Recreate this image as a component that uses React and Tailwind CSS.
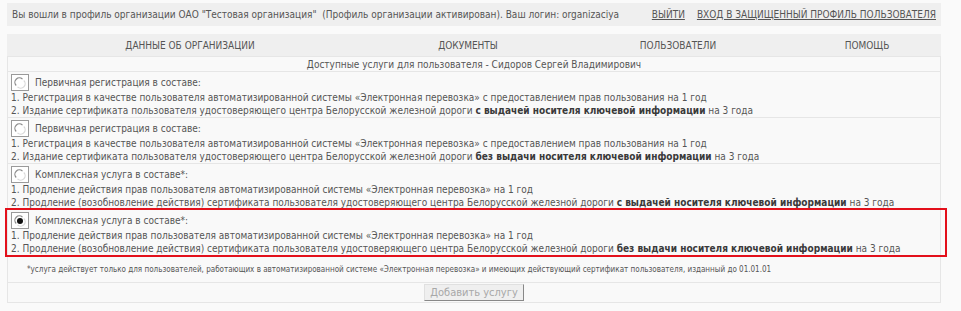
import React from 'react'

const Radio = ({ checked }) => (
  <div className="w-[18px] h-[17px] border border-[#9a9a9a] bg-white flex items-center justify-center shrink-0">
    <svg width="12" height="12" viewBox="0 0 12 12">
      <path d="M2.2 8.5 A4.3 4.3 0 0 1 8.5 2.2" fill="none" stroke="#8a8a8a" strokeWidth="1.2" />
      <path d="M9.8 3.5 A4.3 4.3 0 0 1 3.5 9.8" fill="none" stroke="#d8d8d8" strokeWidth="1.2" />
      {checked && <circle cx="6" cy="6" r="3" fill="#111" />}
    </svg>
  </div>
)

const services = [
  {
    title: 'Первичная регистрация в составе:',
    l1: '1. Регистрация в качестве пользователя автоматизированной системы «Электронная перевозка» с предоставлением прав пользования на 1 год',
    pre: '2. Издание сертификата пользователя удостоверяющего центра Белорусской железной дороги ',
    bold: 'с выдачей носителя ключевой информации',
  },
  {
    title: 'Первичная регистрация в составе:',
    l1: '1. Регистрация в качестве пользователя автоматизированной системы «Электронная перевозка» с предоставлением прав пользования на 1 год',
    pre: '2. Издание сертификата пользователя удостоверяющего центра Белорусской железной дороги ',
    bold: 'без выдачи носителя ключевой информации',
  },
  {
    title: 'Комплексная услуга в составе*:',
    l1: '1. Продление действия прав пользователя автоматизированной системы «Электронная перевозка» на 1 год',
    pre: '2. Продление (возобновление действия) сертификата пользователя удостоверяющего центра Белорусской железной дороги ',
    bold: 'с выдачей носителя ключевой информации',
  },
  {
    title: 'Комплексная услуга в составе*:',
    l1: '1. Продление действия прав пользователя автоматизированной системы «Электронная перевозка» на 1 год',
    pre: '2. Продление (возобновление действия) сертификата пользователя удостоверяющего центра Белорусской железной дороги ',
    bold: 'без выдачи носителя ключевой информации',
    checked: true,
  },
]

const App = () => {
  return (
    <div className="min-h-[311px] bg-[#fafafa] pt-[3px] px-[7px] text-[#555] text-[10px] leading-[13px]" style={{ fontFamily: '"DejaVu Sans Condensed", "DejaVu Sans", sans-serif' }}>
      <div className="w-[934px] h-[23px] bg-[#efefef] flex items-center pl-[5px] pr-[5px] whitespace-nowrap">
        <span className="whitespace-pre">Вы вошли в профиль организации ОАО "Тестовая организация"  (Профиль организации активирован). Ваш логин: organizaciya</span>
        <a href="#" className="ml-auto underline text-[#555]">ВЫЙТИ</a>
        <a href="#" className="ml-[12px] underline text-[#555]">ВХОД В ЗАЩИЩЕННЫЙ ПРОФИЛЬ ПОЛЬЗОВАТЕЛЯ</a>
      </div>

      <div className="mt-[8px] w-[934px] h-[22px] bg-[#efefef] grid grid-cols-[366px_190px_230px_148px] items-center text-center">
        <span>ДАННЫЕ ОБ ОРГАНИЗАЦИИ</span>
        <span>ДОКУМЕНТЫ</span>
        <span>ПОЛЬЗОВАТЕЛИ</span>
        <span>ПОМОЩЬ</span>
      </div>

      <div className="w-[934px] border border-[#e6e6e6] bg-[#f9f9f9]">
        <div className="h-[15px] flex items-center justify-center border-b border-[#e6e6e6]">
          Доступные услуги для пользователя - Сидоров Сергей Владимирович
        </div>

        {services.map((s, i) => (
          <div key={i} className="relative pt-[2px] pl-[3px] border-b border-[#e6e6e6] whitespace-nowrap">
            <div className="flex items-center h-[17px]">
              <Radio checked={s.checked} />
              <span className="ml-[6px]">{s.title}</span>
            </div>
            <div>{s.l1}</div>
            <div>{s.pre}<b className="text-[#3a3a3a]">{s.bold}</b> на 3 года</div>
            {s.checked && (
              <div className="absolute left-[-3px] right-[-7px] top-[-2px] bottom-[-2px] border-2 border-[#e3101b] pointer-events-none" />
            )}
          </div>
        ))}

        <div className="h-[27px] flex items-center pl-[19px] text-[8px] border-b border-[#e6e6e6] whitespace-nowrap">
          *услуга действует только для пользователей, работающих в автоматизированной системе «Электронная перевозка» и имеющих действующий сертификат пользователя, изданный до 01.01.01
        </div>

        <div className="h-[19px] flex items-center justify-center">
          <button disabled className="h-[17px] px-[5px] border border-t-[#e0e0e0] border-l-[#e0e0e0] border-r-[#888] border-b-[#888] bg-[#efefef] text-[#a8a8a8] text-[11px] leading-[13px]">Добавить услугу</button>
        </div>
      </div>
    </div>
  )
}

export default App
